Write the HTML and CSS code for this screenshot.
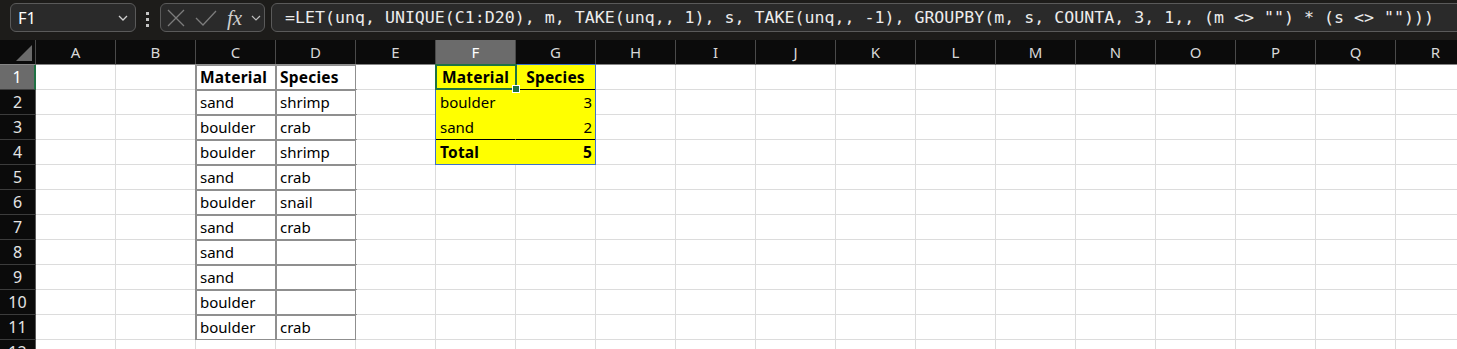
FILE: index.html
```html
<!DOCTYPE html>
<html lang="en">
<head>
    <meta charset="UTF-8">
    <meta name="viewport" content="width=device-width, initial-scale=1.0">
    <title>Sheet - GROUPBY</title>
    <link rel="stylesheet" href="styles.css">
</head>
<body>
    <div class="toolbar">
        <div class="namebox">
            <span>F1</span>
            <svg class="chev" width="10" height="6" viewBox="0 0 10 6"><path d="M1 1 L5 5 L9 1" fill="none" stroke="#d0d0d0" stroke-width="1.3"/></svg>
        </div>
        <div class="dots"><i></i><i></i><i></i></div>
        <div class="fxbox">
            <svg class="cancel" width="18" height="18" viewBox="0 0 18 18"><path d="M1 1 L17 17 M17 1 L1 17" stroke="#7c7c7c" stroke-width="1.3"/></svg>
            <svg class="enter" width="22" height="18" viewBox="0 0 22 18"><path d="M1 9 L8 16 L21 2" fill="none" stroke="#7c7c7c" stroke-width="1.3"/></svg>
            <span class="fx">fx</span>
            <svg class="chev" width="10" height="6" viewBox="0 0 10 6"><path d="M1 1 L5 5 L9 1" fill="none" stroke="#bdbdbd" stroke-width="1.2"/></svg>
        </div>
        <div class="formula">=LET(unq, UNIQUE(C1:D20), m, TAKE(unq,, 1), s, TAKE(unq,, -1), GROUPBY(m, s, COUNTA, 3, 1,, (m &lt;&gt; "") * (s &lt;&gt; "")))</div>
    </div>

    <div class="sheet" id="sheet">
        <div class="spill-frame"></div>
        <div class="sel-frame"><span class="handle"></span></div>
    </div>

    <script>
        const cols = "ABCDEFGHIJKLMNOPQR".split("");
        const cells = {
            C1: ["Material", "box b"], D1: ["Species", "box b"],
            C2: ["sand", "box"], D2: ["shrimp", "box"],
            C3: ["boulder", "box"], D3: ["crab", "box"],
            C4: ["boulder", "box"], D4: ["shrimp", "box"],
            C5: ["sand", "box"], D5: ["crab", "box"],
            C6: ["boulder", "box"], D6: ["snail", "box"],
            C7: ["sand", "box"], D7: ["crab", "box"],
            C8: ["sand", "box"], D8: ["", "box"],
            C9: ["sand", "box"], D9: ["", "box"],
            C10: ["boulder", "box"], D10: ["", "box"],
            C11: ["boulder", "box"], D11: ["crab", "box"],
            F1: ["Material", "spill b ctr line"], G1: ["Species", "spill b ctr line"],
            F2: ["boulder", "spill"], G2: ["3", "spill num"],
            F3: ["sand", "spill line"], G3: ["2", "spill num line"],
            F4: ["Total", "spill b"], G4: ["5", "spill b num"]
        };
        const sheet = document.getElementById("sheet");

        function add(cls, text) {
            let d = document.createElement("div");
            d.className = cls;
            d.textContent = text;
            sheet.appendChild(d);
        }

        add("corner", "");
        cols.forEach(c => add(c == "F" ? "hd sel" : "hd", c));
        for (let r = 1; r <= 12; r++) {
            add(r == 1 ? "rh sel" : "rh", r);
            cols.forEach(c => {
                let v = cells[c + r] || ["", ""];
                add("cell " + v[1], v[0]);
            });
        }
    </script>
</body>
</html>
```

FILE: styles.css
```css
body {
    margin: 0;
    overflow: hidden;
    background: #fff;
    font-family: "Noto Sans", Arial, sans-serif;
}
.toolbar {
    height: 40px;
    box-sizing: border-box;
    background: #1d1c1a;
    display: flex;
    align-items: flex-start;
    padding: 3px 0 0 10px;
}
.namebox, .fxbox, .formula {
    height: 29px;
    box-sizing: border-box;
    border: 1px solid #5a5a5a;
    border-radius: 6px;
    background: #2a2a2a;
    display: flex;
    align-items: center;
}
.namebox {
    width: 126px;
    justify-content: space-between;
    padding: 0 7px;
    color: #fff;
    font-size: 16.5px;
}
.dots {
    display: flex;
    flex-direction: column;
    gap: 3px;
    margin: 9px 11px 0 10px;
}
.dots i {
    display: block;
    width: 3px;
    height: 3px;
    background: #c4c4c4;
}
.fxbox {
    width: 105px;
    padding-left: 6px;
}
.fxbox .enter {
    margin-left: 10px;
}
.fx {
    margin-left: 10px;
    font-family: "Liberation Serif", serif;
    font-style: italic;
    font-size: 21px;
    color: #cfcfcf;
    line-height: 20px;
    width: 19px;
}
.fxbox .chev {
    margin-left: 5px;
}
.formula {
    flex: 1;
    margin: 0 -20px 0 6px;
    padding-left: 13px;
    font-family: "DejaVu Sans Mono", "Liberation Mono", monospace;
    font-size: 16.6px;
    color: #ececec;
    white-space: pre;
    overflow: hidden;
}

.sheet {
    position: relative;
    display: grid;
    grid-template-columns: 36px repeat(18, 80px);
    grid-auto-rows: 25px;
    font-size: 15px;
}
.corner, .hd, .rh, .cell {
    box-sizing: border-box;
    line-height: 24px;
    white-space: nowrap;
    overflow: hidden;
}
.corner {
    position: relative;
    background: #0b0b0b;
    border-right: 1px solid #4a4a4a;
    border-bottom: 1px solid #858585;
}
.corner::after {
    content: "";
    position: absolute;
    right: 3px;
    bottom: 3px;
    border-left: 16px solid transparent;
    border-bottom: 16px solid #6a6a6a;
}
.hd {
    background: #0b0b0b;
    color: #d8d8d8;
    text-align: center;
    border-right: 1px solid #4a4a4a;
    border-bottom: 1px solid #858585;
}
.hd.sel {
    background: #6b6b6b;
    color: #fff;
    border-bottom-color: #1f7244;
}
.rh {
    background: #0b0b0b;
    color: #e4e4e4;
    text-align: center;
    font-size: 16px;
    border-right: 1px solid #5a5a5a;
    border-bottom: 1px solid #3c3c3c;
}
.rh.sel {
    background: #6b6b6b;
    color: #fff;
    border-right: 2px solid #1f7244;
}
.cell {
    background: #fff;
    color: #000;
    padding: 0 4px;
    border-right: 1px solid #dcdcdc;
    border-bottom: 1px solid #dcdcdc;
}
.box {
    outline: 2px solid #8f8f8f;
    outline-offset: -1px;
}
.b {
    font-weight: bold;
    font-size: 15.5px;
    letter-spacing: 0.2px;
}
.ctr {
    text-align: center;
}
.num {
    text-align: right;
    padding-right: 3px;
}
.spill {
    background: #ffff00;
    border-color: #ffff00;
}
.spill.line {
    border-bottom-color: #000;
}
.spill-frame {
    position: absolute;
    left: 435px;
    top: 24px;
    width: 161px;
    height: 101px;
    box-sizing: border-box;
    border: 1px solid #3f72c9;
    z-index: 1;
}
.sel-frame {
    position: absolute;
    left: 435px;
    top: 24px;
    width: 82px;
    height: 26px;
    box-sizing: border-box;
    border: 2px solid #1f7244;
    z-index: 2;
}
.handle {
    position: absolute;
    right: -5px;
    bottom: -5px;
    width: 6px;
    height: 6px;
    background: #1f7244;
    border: 1px solid #fff;
}
```
